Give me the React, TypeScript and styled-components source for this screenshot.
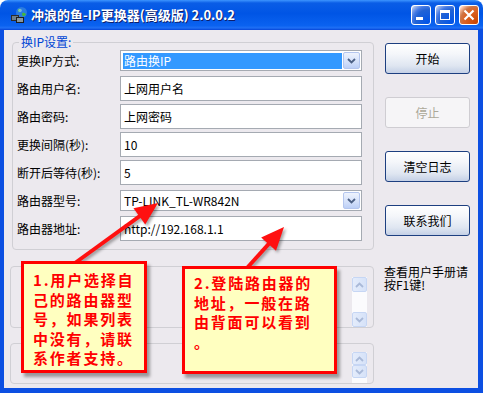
import styled, { createGlobalStyle } from 'styled-components';

const GlobalStyle = createGlobalStyle`
    html, body {
        margin: 0;
        padding: 0;
        background: #ffffff;
    }
    body {
        font-family: "Noto Sans CJK SC", "Liberation Sans", sans-serif;
        font-size: 12px;
        color: #000000;
    }
    * {
        box-sizing: border-box;
    }
`;

const FONT = `"Noto Sans CJK SC", "Liberation Sans", sans-serif`;

// window frame
const Window = styled.div`
    position: relative;
    width: 483px;
    height: 393px;
    display: flex;
    flex-direction: column;
    overflow: hidden;
`;

const TitleBar = styled.div`
    height: 30px;
    flex: none;
    display: flex;
    align-items: center;
    padding: 0 4px 0 10px;
    border-radius: 8px 8px 0 0;
    background: linear-gradient(
        180deg,
        #3d95ff 0%,
        #0a5de6 10%,
        #0055e5 45%,
        #0a62f0 85%,
        #1f6ff5 93%,
        #0545d8 100%
    );
`;

const TitleText = styled.span`
    margin-left: 3px;
    flex: 1;
    color: #ffffff;
    font-family: ${FONT};
    font-size: 13px;
    font-weight: bold;
    line-height: 16px;
    text-shadow: 1px 1px 0 #0f1f6b;
`;

const CaptionGroup = styled.div`
    display: flex;
    gap: 4px;
`;

const CaptionButton = styled.div<{ $close?: boolean }>`
    width: 20px;
    height: 20px;
    border: 1px solid #ffffff;
    border-radius: 3px;
    display: flex;
    align-items: center;
    justify-content: center;
    background: ${({ $close }) =>
        $close
            ? 'radial-gradient(circle at 90% 90%, #cc4600 0%, #dc6527 55%, #cd7546 70%, #ffccb2 90%, #ffffff 100%)'
            : 'radial-gradient(circle at 90% 90%, #0054e9 0%, #2263d5 55%, #4479e4 70%, #a3bbec 90%, #ffffff 100%)'};
`;

const Frame = styled.div`
    flex: 1;
    display: flex;
    background: #ece9ee;
    border-style: solid;
    border-color: #0c4fe2;
    border-width: 0 5px 5px 4px;
    padding-left: 6px;
`;

// left side
const LeftColumn = styled.div`
    width: 364px;
    flex: none;
    display: flex;
    flex-direction: column;
`;

const GroupBox = styled.fieldset`
    width: 362px;
    margin: 6px 0 0 2px;
    padding: 0 11px 8px 4px;
    border: 1px solid #d0cfd4;
    border-radius: 4px;
    min-width: 0;
`;

const GroupLegend = styled.legend`
    margin-left: 2px;
    padding: 0 2px;
    color: #0046d5;
    font-size: 12px;
    line-height: 12px;
`;

const FormGrid = styled.div`
    display: grid;
    grid-template-columns: 103px 242px;
    grid-auto-rows: 25px;
    row-gap: 3px;
    align-items: center;
`;

const Label = styled.span`
    font-size: 12px;
    line-height: 14px;
    white-space: nowrap;
`;

const Field = styled.div`
    height: 25px;
    display: flex;
    align-items: center;
    padding: 0 3px;
    background: #ffffff;
    border: 1px solid #a5aab2;
    font-size: 12px;
    line-height: 14px;
    white-space: nowrap;
`;

const Combo = styled.div`
    height: 21px;
    display: flex;
    padding: 1px;
    background: #ffffff;
    border: 1px solid #a5aab2;
`;

const ComboValue = styled.div<{ $selected?: boolean }>`
    flex: 1;
    margin: 1px 1px 0 1px;
    padding-left: 1px;
    display: flex;
    align-items: center;
    font-size: 12px;
    line-height: 14px;
    white-space: nowrap;
    color: ${({ $selected }) => ($selected ? '#ffffff' : '#000000')};
    background: ${({ $selected }) => ($selected ? '#3399ff' : 'transparent')};
`;

const ComboButton = styled.div`
    width: 17px;
    height: 17px;
    display: flex;
    align-items: center;
    justify-content: center;
    border: 1px solid #b4c6ee;
    border-radius: 2px;
    background: linear-gradient(180deg, #eef3fd 0%, #d3e0fa 60%, #bccff7 100%);
`;

const LogBox = styled.div<{ $h: number; $top: number; $pad: number }>`
    height: ${({ $h }) => $h}px;
    margin-top: ${({ $top }) => $top}px;
    display: flex;
    justify-content: flex-end;
    padding: ${({ $pad }) => $pad}px 6px 0 0;
    border: 1px solid #d0cfd4;
    border-radius: 4px;
`;

const Scroller = styled.div`
    width: 15px;
    display: flex;
    flex-direction: column;
    background: #fbfbfd;
`;

const ScrollButton = styled.div<{ $h: number }>`
    height: ${({ $h }) => $h}px;
    display: flex;
    align-items: center;
    justify-content: center;
    border: 1px solid #c6d6f4;
    border-radius: 2px;
    background: linear-gradient(90deg, #e4ecfb 0%, #d6e2f8 100%);
`;

const ScrollTrack = styled.div`
    flex: 1;
`;

// right side
const RightColumn = styled.div`
    margin-left: 11px;
    padding-top: 13px;
    display: flex;
    flex-direction: column;
`;

const PushButton = styled.div<{ $disabled?: boolean }>`
    width: 85px;
    height: 31px;
    margin-bottom: 23px;
    display: flex;
    align-items: center;
    justify-content: center;
    border-radius: 3px;
    font-size: 12px;
    line-height: 14px;
    border: 1px solid ${({ $disabled }) => ($disabled ? '#cfcdd2' : '#1d3f80')};
    color: ${({ $disabled }) => ($disabled ? '#aca899' : '#000000')};
    background: ${({ $disabled }) =>
        $disabled
            ? '#f6f5f7'
            : 'linear-gradient(180deg, #ffffff 0%, #f4f6fa 35%, #dfe6f1 75%, #c4d0e6 100%)'};
`;

const HelpText = styled.p`
    margin: 6px 0 0 -1px;
    width: 86px;
    font-size: 12px;
    line-height: 13px;
`;

// overlays: notes and arrows
const Callout = styled.div<{ $x: number; $y: number; $w: number; $h: number; $pt: number }>`
    position: absolute;
    left: ${({ $x }) => $x}px;
    top: ${({ $y }) => $y}px;
    width: ${({ $w }) => $w}px;
    height: ${({ $h }) => $h}px;
    padding: ${({ $pt }) => $pt}px 0 0 9px;
    background: #ffffc0;
    border: 3px solid #ff0000;
    box-shadow: 3px 4px 3px rgba(0, 0, 0, 0.35);
    z-index: 3;
`;

const CalloutText = styled.p<{ $w: number }>`
    margin: 0;
    width: ${({ $w }) => $w}px;
    color: #ff0000;
    font-family: ${FONT};
    font-size: 15px;
    font-weight: bold;
    letter-spacing: 1.8px;
    line-height: 19.5px;
    line-break: anywhere;
`;

const ArrowLayer = styled.svg`
    position: absolute;
    left: 0;
    top: 0;
    z-index: 2;
    pointer-events: none;
    filter: drop-shadow(2px 2px 1.5px rgba(0, 0, 0, 0.35));
`;

const Chevron = ({ up, color = '#4d6185' }: { up?: boolean; color?: string }) => (
    <svg width="9" height="6" viewBox="0 0 9 6">
        <path
            d={up ? 'M1 5 L4.5 1.5 L8 5' : 'M1 1 L4.5 4.5 L8 1'}
            fill="none"
            stroke={color}
            strokeWidth="1.8"
        />
    </svg>
);

const AppIcon = () => (
    <svg width="18" height="18" viewBox="0 0 18 18">
        <circle cx="11.5" cy="6.5" r="5.5" fill="#2a7be0" />
        <path d="M8 3.5 Q10 2 11 4 Q10 6 8.5 6 Z" fill="#46b83a" />
        <path d="M12 7 Q15 6 16 8.5 Q14 11 12.5 10 Z" fill="#46b83a" />
        <circle cx="10" cy="4.5" r="1.8" fill="#9fd0ff" opacity="0.6" />
        <rect x="1" y="9" width="8" height="6" fill="#2b2b2b" />
        <rect x="2" y="10" width="6" height="4" fill="#6c7f8c" />
        <rect x="6" y="11" width="8" height="6" fill="#1e1e1e" />
        <rect x="7" y="12" width="6" height="4" fill="#8597a3" />
    </svg>
);

const arrowShape = (x1: number, y1: number, x2: number, y2: number) => {
    const len = Math.hypot(x2 - x1, y2 - y1);
    const ux = (x2 - x1) / len;
    const uy = (y2 - y1) / len;
    const px = -uy;
    const py = ux;
    const head = 23;
    const half = 10;
    const bx = x2 - ux * head;
    const by = y2 - uy * head;
    return {
        shaft: { x1, y1, x2: bx + ux * 3, y2: by + uy * 3 },
        head: `${x2},${y2} ${bx + px * half},${by + py * half} ${bx - px * half},${by - py * half}`,
    };
};

const ARROWS = [arrowShape(75, 263, 158, 203), arrowShape(247, 268, 284, 227)];

const ROWS: { label: string; value: string; combo?: boolean; selected?: boolean }[] = [
    { label: '更换IP方式:', value: '路由换IP', combo: true, selected: true },
    { label: '路由用户名:', value: '上网用户名' },
    { label: '路由密码:', value: '上网密码' },
    { label: '更换间隔(秒):', value: '10' },
    { label: '断开后等待(秒):', value: '5' },
    { label: '路由器型号:', value: 'TP-LINK_TL-WR842N', combo: true },
    { label: '路由器地址:', value: 'http://192.168.1.1' },
];

const App = () => {
    return (
        <>
            <GlobalStyle />
            <Window>
                <TitleBar>
                    <AppIcon />
                    <TitleText>冲浪的鱼-IP更换器(高级版) 2.0.0.2</TitleText>
                    <CaptionGroup>
                        <CaptionButton>
                            <svg width="18" height="18" viewBox="0 0 18 18">
                                <rect x="4" y="11" width="7" height="3" fill="#ffffff" />
                            </svg>
                        </CaptionButton>
                        <CaptionButton>
                            <svg width="18" height="18" viewBox="0 0 18 18">
                                <rect x="4.5" y="4.5" width="9" height="9" fill="none" stroke="#ffffff" strokeWidth="1" />
                                <rect x="4" y="4" width="10" height="3" fill="#ffffff" />
                            </svg>
                        </CaptionButton>
                        <CaptionButton $close>
                            <svg width="18" height="18" viewBox="0 0 18 18">
                                <path d="M4.5 4.5 L13.5 13.5 M13.5 4.5 L4.5 13.5" stroke="#ffffff" strokeWidth="2.2" />
                            </svg>
                        </CaptionButton>
                    </CaptionGroup>
                </TitleBar>

                <Frame>
                    <LeftColumn>
                        <GroupBox>
                            <GroupLegend>换IP设置:</GroupLegend>
                            <FormGrid>
                                {ROWS.map((row) => [
                                    <Label key={row.label}>{row.label}</Label>,
                                    row.combo ? (
                                        <Combo key={row.label + '-v'}>
                                            <ComboValue $selected={row.selected}>
                                                {row.value}
                                            </ComboValue>
                                            <ComboButton>
                                                <Chevron />
                                            </ComboButton>
                                        </Combo>
                                    ) : (
                                        <Field key={row.label + '-v'}>{row.value}</Field>
                                    ),
                                ])}
                            </FormGrid>
                        </GroupBox>

                        <LogBox $h={62} $top={16} $pad={10}>
                            <Scroller>
                                <ScrollButton $h={15}>
                                    <Chevron up color="#a9b9d8" />
                                </ScrollButton>
                                <ScrollTrack />
                                <ScrollButton $h={15}>
                                    <Chevron color="#a9b9d8" />
                                </ScrollButton>
                            </Scroller>
                        </LogBox>
                        <LogBox $h={41} $top={15} $pad={8}>
                            <Scroller>
                                <ScrollButton $h={13}>
                                    <Chevron up color="#a9b9d8" />
                                </ScrollButton>
                                <ScrollButton $h={13}>
                                    <Chevron color="#a9b9d8" />
                                </ScrollButton>
                            </Scroller>
                        </LogBox>
                    </LeftColumn>

                    <RightColumn>
                        <PushButton>开始</PushButton>
                        <PushButton $disabled>停止</PushButton>
                        <PushButton>清空日志</PushButton>
                        <PushButton>联系我们</PushButton>
                        <HelpText>查看用户手册请按F1键!</HelpText>
                    </RightColumn>
                </Frame>

                <ArrowLayer width="483" height="393" viewBox="0 0 483 393">
                    {ARROWS.map((a, i) => (
                        <g key={i}>
                            <line {...a.shaft} stroke="#ff1010" strokeWidth="4" />
                            <polygon points={a.head} fill="#ff1010" />
                        </g>
                    ))}
                </ArrowLayer>

                <Callout $x={21} $y={261} $w={126} $h={112} $pt={6}>
                    <CalloutText $w={104}>
                        1.用户选择自己的路由器型号，如果列表中没有，请联系作者支持。
                    </CalloutText>
                </Callout>
                <Callout $x={182} $y={266} $w={155} $h={108} $pt={4}>
                    <CalloutText $w={121}>
                        2.登陆路由器的地址，一般在路由背面可以看到。
                    </CalloutText>
                </Callout>
            </Window>
        </>
    );
};

export default App;
